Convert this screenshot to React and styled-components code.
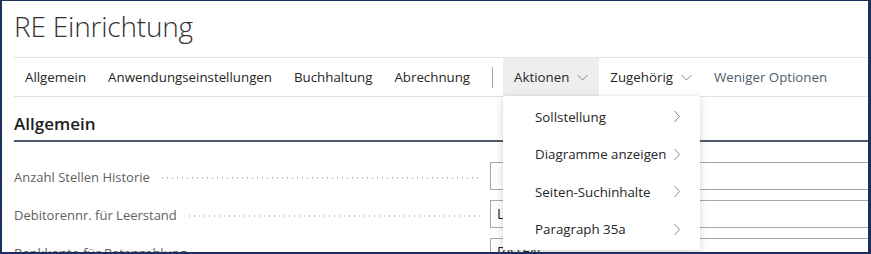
import React from "react";
import styled, { createGlobalStyle } from "styled-components";

const GlobalStyle = createGlobalStyle`
    html, body {
        margin: 0;
        padding: 0;
        background: #ffffff;
    }
    body {
        font-family: "Segoe UI", "Open Sans", "Liberation Sans", sans-serif;
        color: #333333;
    }
    * {
        box-sizing: border-box;
    }
`;

const ChevronDown = () => (
    <svg width="11" height="7" viewBox="0 0 11 7">
        <path d="M0.5 1 L5.5 6 L10.5 1" fill="none" stroke="#8a8a8a" strokeWidth="1" />
    </svg>
);

const ChevronRight = () => (
    <svg width="8" height="13" viewBox="0 0 8 13">
        <path d="M1.5 1 L6.5 6.5 L1.5 12" fill="none" stroke="#8a8a8a" strokeWidth="1" />
    </svg>
);

const navItems = ["Allgemein", "Anwendungseinstellungen", "Buchhaltung", "Abrechnung"];
const menuItems = ["Sollstellung", "Diagramme anzeigen", "Seiten-Suchinhalte", "Paragraph 35a"];
const fields = [
    { label: "Anzahl Stellen Historie", value: "" },
    { label: "Debitorennr. für Leerstand", value: "L" },
    { label: "Bankkonto für Ratenzahlung", value: "RATEN" },
];

export default function App() {
    return (
        <>
            <GlobalStyle />
            <Frame>
                <Page>
                    <Title>RE Einrichtung</Title>
                    <NavBar>
                        {navItems.map((item) => (
                            <NavItem key={item}>{item}</NavItem>
                        ))}
                        <NavDivider />
                        <DropdownWrap>
                            <NavItem $active>
                                Aktionen
                                <ChevronDown />
                            </NavItem>
                            <Menu>
                                {menuItems.map((item) => (
                                    <MenuItem key={item}>
                                        <span>{item}</span>
                                        <ChevronRight />
                                    </MenuItem>
                                ))}
                            </Menu>
                        </DropdownWrap>
                        <NavItem>
                            Zugehörig
                            <ChevronDown />
                        </NavItem>
                        <NavItem $muted>Weniger Optionen</NavItem>
                    </NavBar>
                    <Section>
                        <SectionTitle>Allgemein</SectionTitle>
                        <Fields>
                            {fields.map((f) => (
                                <FieldRow key={f.label}>
                                    <Label>
                                        <span>{f.label}</span>
                                        <Leader />
                                    </Label>
                                    <Input>{f.value}</Input>
                                </FieldRow>
                            ))}
                        </Fields>
                    </Section>
                </Page>
            </Frame>
        </>
    );
}

const Frame = styled.div`
    width: 871px;
    height: 254px;
    border-style: solid;
    border-color: #1c2f5e;
    border-width: 1px 3px 2px 2px;
    overflow: hidden;
    background: #ffffff;
`;

const Page = styled.div`
    padding-left: 12px;
`;

const Title = styled.div`
    height: 56px;
    font-size: 28px;
    font-weight: 300;
    color: #333333;
    line-height: 50px;
    letter-spacing: -0.2px;
`;

const NavBar = styled.div`
    display: flex;
    align-items: center;
    height: 40px;
    border-top: 1px solid #e3e3e3;
    border-bottom: 1px solid #e3e3e3;
    font-size: 13.3px;
`;

const NavItem = styled.div`
    display: flex;
    align-items: center;
    gap: 8px;
    height: 38px;
    padding: 0 11px;
    flex-shrink: 0;
    color: ${(p) => (p.$muted ? "#505c6d" : "#262626")};
    background: ${(p) => (p.$active ? "#eeeeee" : "transparent")};
    white-space: nowrap;
`;

const NavDivider = styled.div`
    flex-shrink: 0;
    width: 1px;
    height: 21px;
    background: #a8a8a8;
    margin: 0 10px 0 11px;
`;

const DropdownWrap = styled.div`
    position: relative;
    flex-shrink: 0;
`;

const Menu = styled.div`
    position: absolute;
    top: 38px;
    left: 0;
    width: 197px;
    padding: 2px 0;
    background: #ffffff;
    box-shadow: 0 3px 10px rgba(0, 0, 0, 0.14), 0 0 2px rgba(0, 0, 0, 0.08);
    z-index: 5;
`;

const MenuItem = styled.div`
    display: flex;
    align-items: center;
    justify-content: space-between;
    height: 37.5px;
    padding: 0 19px 0 32px;
    font-size: 13.3px;
    color: #262626;
    white-space: nowrap;
`;

const Section = styled.div`
    padding-top: 15px;
`;

const SectionTitle = styled.div`
    font-size: 17px;
    font-weight: 600;
    color: #212121;
    line-height: 24px;
    padding-bottom: 4px;
    border-bottom: 2px solid #505a6e;
`;

const Fields = styled.div`
    display: flex;
    flex-direction: column;
    gap: 10px;
    padding-top: 20px;
`;

const FieldRow = styled.div`
    display: flex;
    align-items: center;
    height: 28px;
`;

const Label = styled.div`
    display: flex;
    align-items: center;
    gap: 10px;
    width: 476px;
    flex-shrink: 0;
    font-size: 13px;
    color: #5f5f5f;
    white-space: nowrap;
    padding-right: 8px;
    padding-top: 2px;
`;

const Leader = styled.div`
    flex: 1;
    height: 2px;
    background-image: radial-gradient(circle, #c4c4c4 0.7px, transparent 0.9px);
    background-size: 5px 2px;
    background-repeat: repeat-x;
    margin-top: 1px;
`;

const Input = styled.div`
    flex-shrink: 0;
    width: 420px;
    height: 28px;
    border: 1px solid #a8a8a8;
    padding: 0 6px;
    font-size: 14px;
    line-height: 26px;
    color: #212121;
`;
